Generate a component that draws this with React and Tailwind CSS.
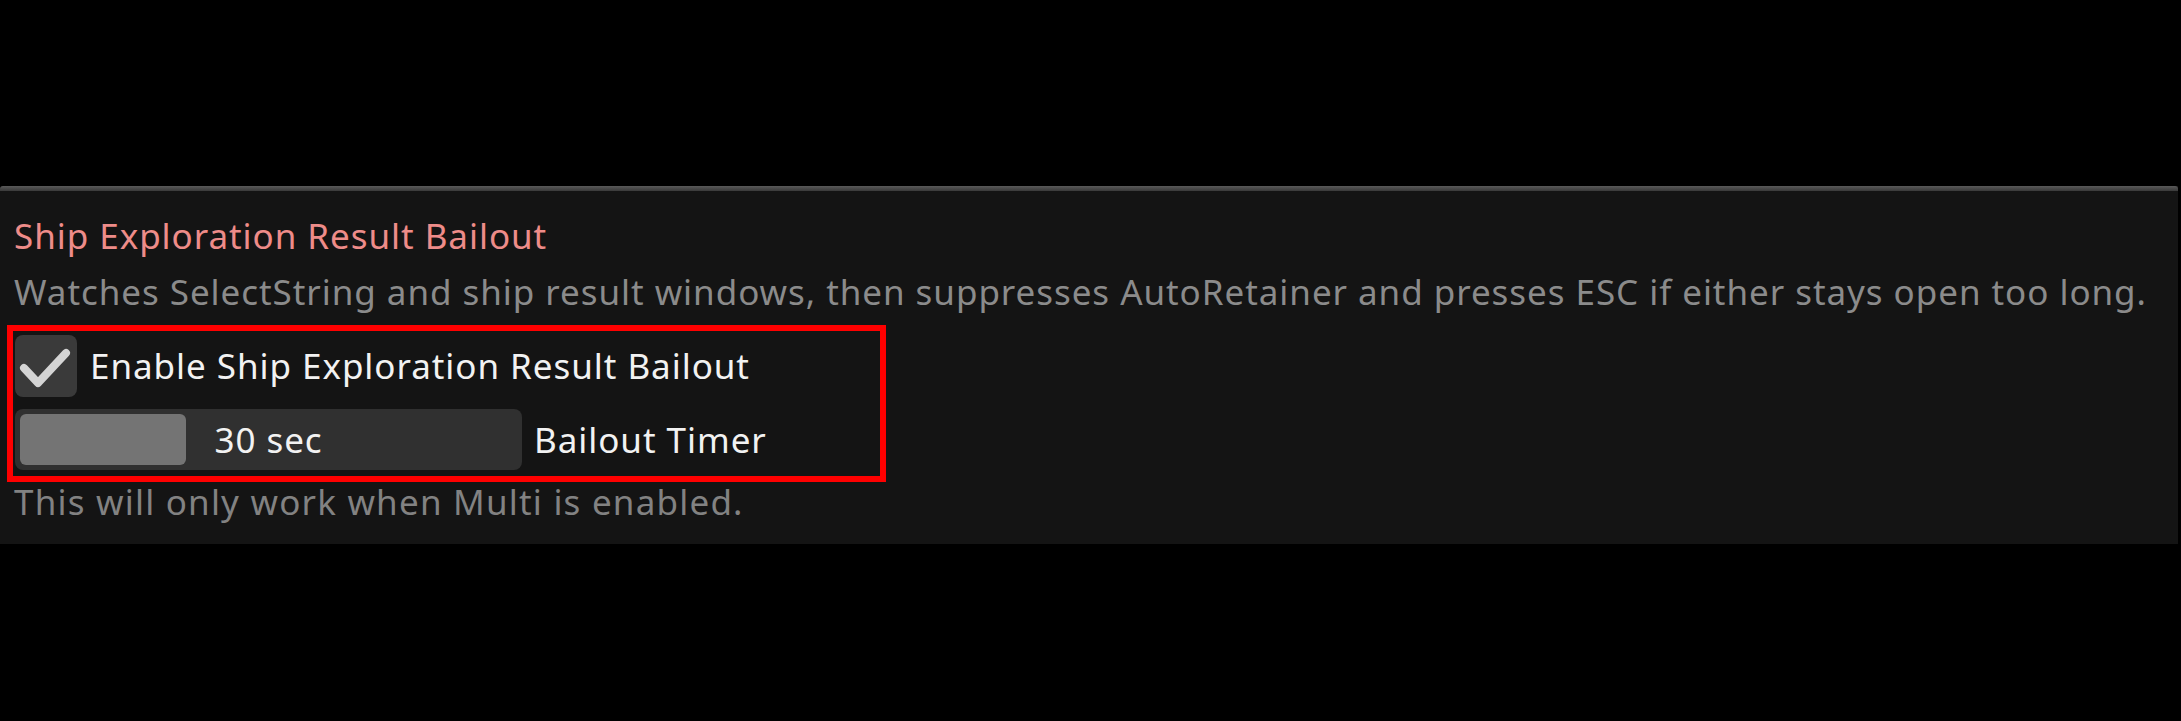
import React from 'react';

const font = { fontFamily: '"Noto Sans", "Open Sans", sans-serif' };

const CheckMark = () => (
  <svg width="62" height="62" viewBox="0 0 62 62" className="block">
    <path
      d="M9 33 L23 48 L51 18"
      fill="none"
      stroke="#d4d4d4"
      strokeWidth="8"
      strokeLinecap="round"
      strokeLinejoin="round"
    />
  </svg>
);

export default function App() {
  return (
    <div className="w-[2181px] h-[721px] bg-black overflow-hidden" style={font}>
      <div className="h-[186px]" />
      {/* settings panel */}
      <div className="w-[2178px] bg-[#141414] rounded-tl-[4px]">
        <div className="h-[5px] bg-gradient-to-b from-[#5a5a5a] to-[#3a3a3a] rounded-t-[3px]" />
        <div className="flex flex-col pt-[22px] pb-[22px] text-[35px] tracking-[0.95px]">
          <div className="pl-[14px] leading-[46px] text-[#ee8c89] whitespace-nowrap">
            Ship Exploration Result Bailout
          </div>
          <div className="mt-[10px] pl-[14px] leading-[46px] text-[#8b8b8b] whitespace-nowrap">
            Watches SelectString and ship result windows, then suppresses AutoRetainer and presses ESC if either stays open too long.
          </div>

          {/* highlighted options */}
          <div className="mt-[10px] ml-[7px] w-[879px] border-[6px] border-[#ff0000] pt-[4px] pl-[2px] pb-[6px]">
            <div className="flex items-center h-[62px]">
              <div className="w-[62px] h-[62px] rounded-[8px] bg-[#3a3a3a] shrink-0">
                <CheckMark />
              </div>
              <span className="ml-[13px] leading-[46px] text-[#f2f2f2] whitespace-nowrap">
                Enable Ship Exploration Result Bailout
              </span>
            </div>
            <div className="mt-[12px] flex items-center h-[61px]">
              <div className="relative w-[507px] h-[61px] rounded-[8px] bg-[#303030] shrink-0 flex items-center justify-center">
                <div className="absolute left-[5px] top-[5px] w-[166px] h-[51px] rounded-[6px] bg-[#747474]" />
                <span className="relative leading-[46px] text-[#f2f2f2]">30 sec</span>
              </div>
              <span className="ml-[12px] leading-[46px] text-[#f2f2f2] whitespace-nowrap">
                Bailout Timer
              </span>
            </div>
          </div>

          <div className="pl-[14px] leading-[40px] tracking-[1.2px] text-[#828282] whitespace-nowrap">
            This will only work when Multi is enabled.
          </div>
        </div>
      </div>
    </div>
  );
}
